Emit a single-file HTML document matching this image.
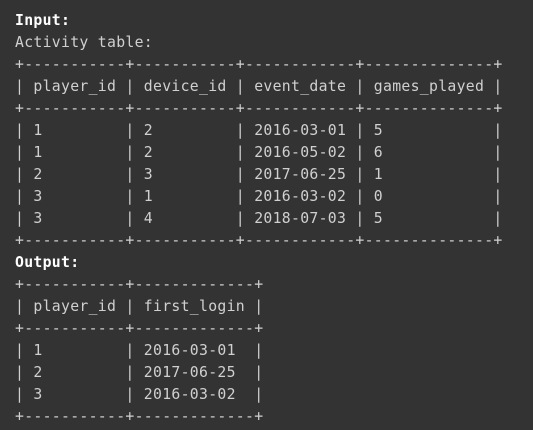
<!DOCTYPE html>
<html><head><style>
html,body{margin:0;padding:0;background:#333;width:533px;height:430px;overflow:hidden}
pre{margin:0;position:absolute;left:15px;top:9px;font-family:"DejaVu Sans Mono","Liberation Mono",monospace;font-size:15px;letter-spacing:0.3px;line-height:22px;color:#d0d0d0;transform:scaleX(0.986);transform-origin:0 0}
b{color:#fff}
</style></head><body>
<pre><b>Input:</b>
Activity table:
+-----------+-----------+------------+--------------+
| player_id | device_id | event_date | games_played |
+-----------+-----------+------------+--------------+
| 1         | 2         | 2016-03-01 | 5            |
| 1         | 2         | 2016-05-02 | 6            |
| 2         | 3         | 2017-06-25 | 1            |
| 3         | 1         | 2016-03-02 | 0            |
| 3         | 4         | 2018-07-03 | 5            |
+-----------+-----------+------------+--------------+
<b>Output:</b>
+-----------+-------------+
| player_id | first_login |
+-----------+-------------+
| 1         | 2016-03-01  |
| 2         | 2017-06-25  |
| 3         | 2016-03-02  |
+-----------+-------------+</pre>
</body></html>
